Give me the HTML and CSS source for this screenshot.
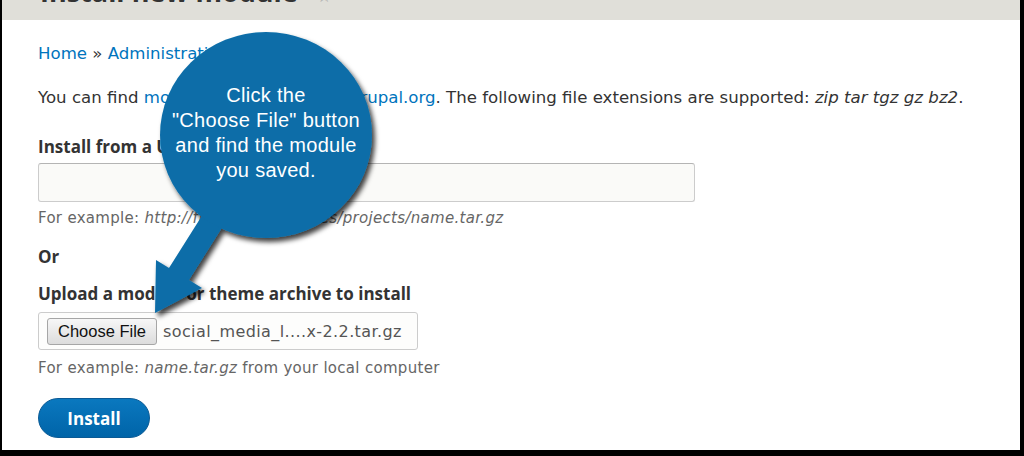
FILE: index.html
```html
<!DOCTYPE html>
<html lang="en">
<head>
  <meta charset="UTF-8">
  <title>Install new module</title>
  <link rel="stylesheet" href="styles.css">
</head>
<body>

<div class="frame">
  <div class="title-bar">
    <h1>Install new module <span class="star">☆</span></h1>
  </div>

  <div class="content">
    <div class="breadcrumb"><a href="#">Home</a> » <a href="#">Administration</a> » <a href="#">Modules</a></div>

    <p class="help">You can find <a href="#">modules</a> and <a href="#">themes</a> on <a href="#">drupal.org</a>. The following file extensions are supported: <em>zip tar tgz gz bz2</em>.</p>

    <label class="field-label">Install from a URL</label>
    <div class="text-input"></div>
    <div class="description">For example: <em>http://ftp.drupal.org/files/projects/name.tar.gz</em></div>

    <div class="or">Or</div>

    <label class="field-label upload-label">Upload a module or theme archive to install</label>
    <div class="file-input">
      <button class="choose-btn" type="button">Choose File</button>
      <span class="file-name">social_media_l....x-2.2.tar.gz</span>
    </div>
    <div class="description">For example: <em>name.tar.gz</em> from your local computer</div>

    <button class="install-btn" type="button">Install</button>
  </div>

  <!-- callout drawn over the form -->
  <svg class="callout-shape" width="1024" height="456" viewBox="0 0 1024 456">
    <defs>
      <filter id="shadow" x="-20%" y="-20%" width="140%" height="140%">
        <feDropShadow dx="3" dy="4" stdDeviation="2.5" flood-color="#000" flood-opacity="0.75"/>
      </filter>
    </defs>
    <g filter="url(#shadow)" fill="#0a6da8">
      <polygon points="242,196 189,280 202,288 155,313 156,260 169,268 222,184"/>
      <ellipse cx="266" cy="135" rx="106" ry="103"/>
    </g>
  </svg>
  <div class="callout-text">Click the<br>"Choose File" button<br>and find the module<br>you saved.</div>
</div>

</body>
</html>
```

FILE: styles.css
```css
body {
  margin: 0;
  background: #000;
  font-family: 'DejaVu Sans', Verdana, sans-serif;
  color: #333;
}
.frame {
  position: relative;
  height: 450px;
  margin: 0 4px 0 2px;
  background: #fff;
  overflow: hidden;
}
.title-bar {
  height: 20px;
  background: #e0dfd9;
  overflow: hidden;
}
.title-bar h1 {
  margin: -22px 0 0 38px;
  font-family: 'Open Sans', sans-serif;
  font-size: 27px;
  line-height: 1;
  font-weight: bold;
  color: #333;
}
.star {
  margin-left: 12px;
  font-size: 16px;
  font-weight: normal;
  color: #aaa;
}
.content {
  padding: 0 36px;
}
a {
  color: #0074bd;
  text-decoration: none;
}
.breadcrumb {
  margin-top: 23px;
  font-size: 16.6px;
  line-height: 22px;
}
.help {
  margin: 22px 0 0;
  font-size: 16.6px;
  line-height: 22px;
}
.help em {
  font-style: italic;
}
.field-label {
  display: block;
  margin-top: 27px;
  font-family: 'Open Sans', sans-serif;
  font-size: 17px;
  line-height: 22px;
  font-weight: bold;
  color: #333;
}
.text-input {
  box-sizing: border-box;
  width: 657px;
  height: 39px;
  margin-top: 5px;
  background: #fafaf8;
  border: 1px solid #ccc;
  border-top-color: #b4b4b4;
  border-radius: 3px;
}
.description {
  margin-top: 7px;
  font-size: 15px;
  letter-spacing: 0.3px;
  line-height: 18px;
  color: #666;
}
.or {
  margin-top: 19px;
  font-family: 'Open Sans', sans-serif;
  font-size: 17px;
  line-height: 22px;
  font-weight: bold;
}
.upload-label {
  margin-top: 15px;
}
.file-input {
  box-sizing: border-box;
  display: flex;
  align-items: center;
  gap: 6px;
  width: 380px;
  height: 38px;
  margin-top: 7px;
  padding: 0 8px;
  background: #fdfdfc;
  border: 1px solid #ccc;
  border-radius: 3px;
}
.choose-btn {
  box-sizing: border-box;
  width: 110px;
  height: 27px;
  padding: 0;
  font-family: 'Liberation Sans', Arial, sans-serif;
  font-size: 16.5px;
  color: #111;
  background: linear-gradient(#f7f7f7, #dcdcdc);
  border: 1px solid #a6a6a6;
  border-radius: 3px;
}
.file-name {
  font-size: 16px;
  letter-spacing: 0.4px;
  color: #555;
}
.file-input + .description {
  margin-top: 9px;
}
.install-btn {
  display: block;
  box-sizing: border-box;
  width: 112px;
  height: 40px;
  margin-top: 21px;
  font-family: 'Open Sans', sans-serif;
  font-size: 17px;
  font-weight: bold;
  color: #fff;
  background: linear-gradient(#0a78bf, #0064a8);
  border: 1px solid #0a5a95;
  border-radius: 20px;
}
.callout-shape {
  position: absolute;
  left: -2px;
  top: 0;
}
.callout-text {
  position: absolute;
  left: 114px;
  top: 83px;
  width: 300px;
  text-align: center;
  font-family: 'Liberation Sans', Arial, sans-serif;
  font-size: 20px;
  letter-spacing: 0.3px;
  line-height: 25px;
  color: #fff;
}
```
